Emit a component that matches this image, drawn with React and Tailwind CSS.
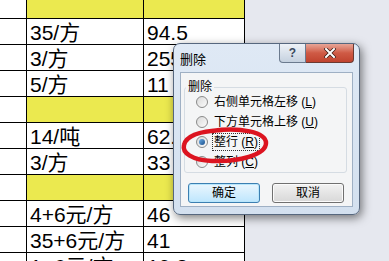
import React from "react";

const rows = [
  { h: 19, yellow: true, a: "", b: "" },
  { a: "35/方", b: "94.5" },
  { a: "3/方", b: "255" },
  { a: "5/方", b: "11" },
  { yellow: true, a: "", b: "" },
  { a: "14/吨", b: "62.5" },
  { a: "3/方", b: "33" },
  { yellow: true, a: "", b: "" },
  { a: "4+6元/方", b: "46" },
  { a: "35+6元/方", b: "41" },
  { a: "1+6元/方", b: "19.8" },
];

function Radio({ checked }) {
  return (
    <span className="relative w-[12px] h-[12px] rounded-full border border-[#8a8a8a] bg-gradient-to-br from-[#d9d9d9] to-[#fbfbfb] flex items-center justify-center shrink-0">
      {checked && (
        <span className="w-[6px] h-[6px] rounded-full bg-gradient-to-br from-[#6fb0e8] to-[#1a4f8a]" />
      )}
    </span>
  );
}

function Opt({ label, k, checked, focus }) {
  return (
    <div className="h-[20px] flex items-center pl-[11px] gap-[5px]">
      <Radio checked={checked} />
      <span
        className={
          "leading-[16px] text-[12px] text-black whitespace-nowrap px-[1px] " +
          (focus ? "outline outline-1 outline-dotted outline-[#333]" : "")
        }
      >
        {label} (<span className="underline">{k}</span>)
      </span>
    </div>
  );
}

export default function App() {
  return (
    <div
      className="relative w-[389px] h-[261px] overflow-hidden bg-[#e6e8ef]"
      style={{ fontFamily: '"Liberation Sans", "Noto Sans CJK SC", sans-serif' }}
    >
      <div className="flex flex-col w-[245px] bg-white">
        {rows.map((r, i) => (
          <div
            key={i}
            className={
              "flex border-b border-black text-[21px] text-black " +
              (i === 0 ? "h-[19px]" : "h-[26px]")
            }
          >
            <div className="w-[27px] border-r border-black bg-white" />
            <div
              className={
                "w-[117px] border-r border-black pl-[3px] pt-[1px] leading-[25px] whitespace-nowrap overflow-hidden " +
                (r.yellow ? "bg-[#ebe94f]" : "bg-white")
              }
            >
              {r.a}
            </div>
            <div
              className={
                "w-[101px] border-r border-black pl-[3px] pt-[1px] leading-[25px] whitespace-nowrap overflow-hidden " +
                (r.yellow ? "bg-[#ebe94f]" : "bg-white")
              }
            >
              {r.b}
            </div>
          </div>
        ))}
      </div>

      {/* Dialog */}
      <div className="absolute left-[173px] top-[43px] w-[187px] h-[172px] rounded-[7px] border border-[#56677e] bg-gradient-to-b from-[#dfe9f5] to-[#d3e0ef] shadow-[2px_3px_10px_rgba(0,0,0,0.5)] flex flex-col">
        <div className="h-[28px] flex justify-between items-start">
          <span className="pl-[6px] pt-[8px] text-[13px] leading-[16px] text-black">删除</span>
          <div className="flex mr-[5px]">
            <div className="w-[27px] h-[19px] rounded-bl-[4px] border border-t-0 border-[#6b7a8e] bg-gradient-to-b from-[#eef2f7] to-[#c5d1df] flex items-center justify-center text-[12px] font-bold text-[#3b4a5e] leading-none">
              ?
            </div>
            <div className="w-[48px] h-[19px] rounded-br-[4px] border border-t-0 border-l-0 border-[#6b3a32] bg-gradient-to-b from-[#e7a597] via-[#cf5a45] to-[#c0432f] flex items-center justify-center">
              <svg width="12" height="10" viewBox="0 0 12 10">
                <path d="M2 1 L10 9 M10 1 L2 9" stroke="#3a1a14" strokeWidth="3.4" strokeLinecap="square" />
                <path d="M2 1 L10 9 M10 1 L2 9" stroke="#ffffff" strokeWidth="2" strokeLinecap="square" />
              </svg>
            </div>
          </div>
        </div>
        <div className="mx-[6px] w-[173px] h-[135px] border border-[#9fb0c4] bg-[#f4f5f6] flex flex-col">
          <fieldset className="ml-[3px] mt-[6px] w-[163px] h-[94px] border border-[#d5dce3] rounded-[3px]">
            <legend className="ml-[1px] px-[2px] text-[12px] leading-[16px] text-black">删除</legend>
            <div className="flex flex-col mt-[-3px]">
              <Opt label="右侧单元格左移" k="L" />
              <Opt label="下方单元格上移" k="U" />
              <Opt label="整行" k="R" checked focus />
              <Opt label="整列" k="C" />
            </div>
          </fieldset>
          <div className="flex gap-[12px] ml-[7px] mt-[10px]">
            <button className="w-[72px] h-[20px] rounded-[3px] border border-[#3c7fb1] bg-gradient-to-b from-[#eaf6fd] to-[#bee6fd] shadow-[inset_0_0_0_1px_#b8e6fb] text-[12px] leading-none text-black">
              确定
            </button>
            <button className="w-[72px] h-[20px] rounded-[3px] border border-[#707070] bg-gradient-to-b from-[#f2f2f2] to-[#d8d8d8] shadow-[inset_0_0_0_1px_#fbfbfb] text-[12px] leading-none text-black">
              取消
            </button>
          </div>
        </div>
      </div>

      {/* red hand-drawn ellipse */}
      <svg className="absolute left-0 top-0" width="389" height="261" viewBox="0 0 389 261">
        <path
          d="M212 131 C240 127 266 132 266 143 C266 155 238 162 212 161 C192 160 182 153 184 145 C186 136 200 131 222 130"
          fill="none"
          stroke="#dc1420"
          strokeWidth="4.5"
          strokeLinecap="round"
        />
      </svg>
    </div>
  );
}
